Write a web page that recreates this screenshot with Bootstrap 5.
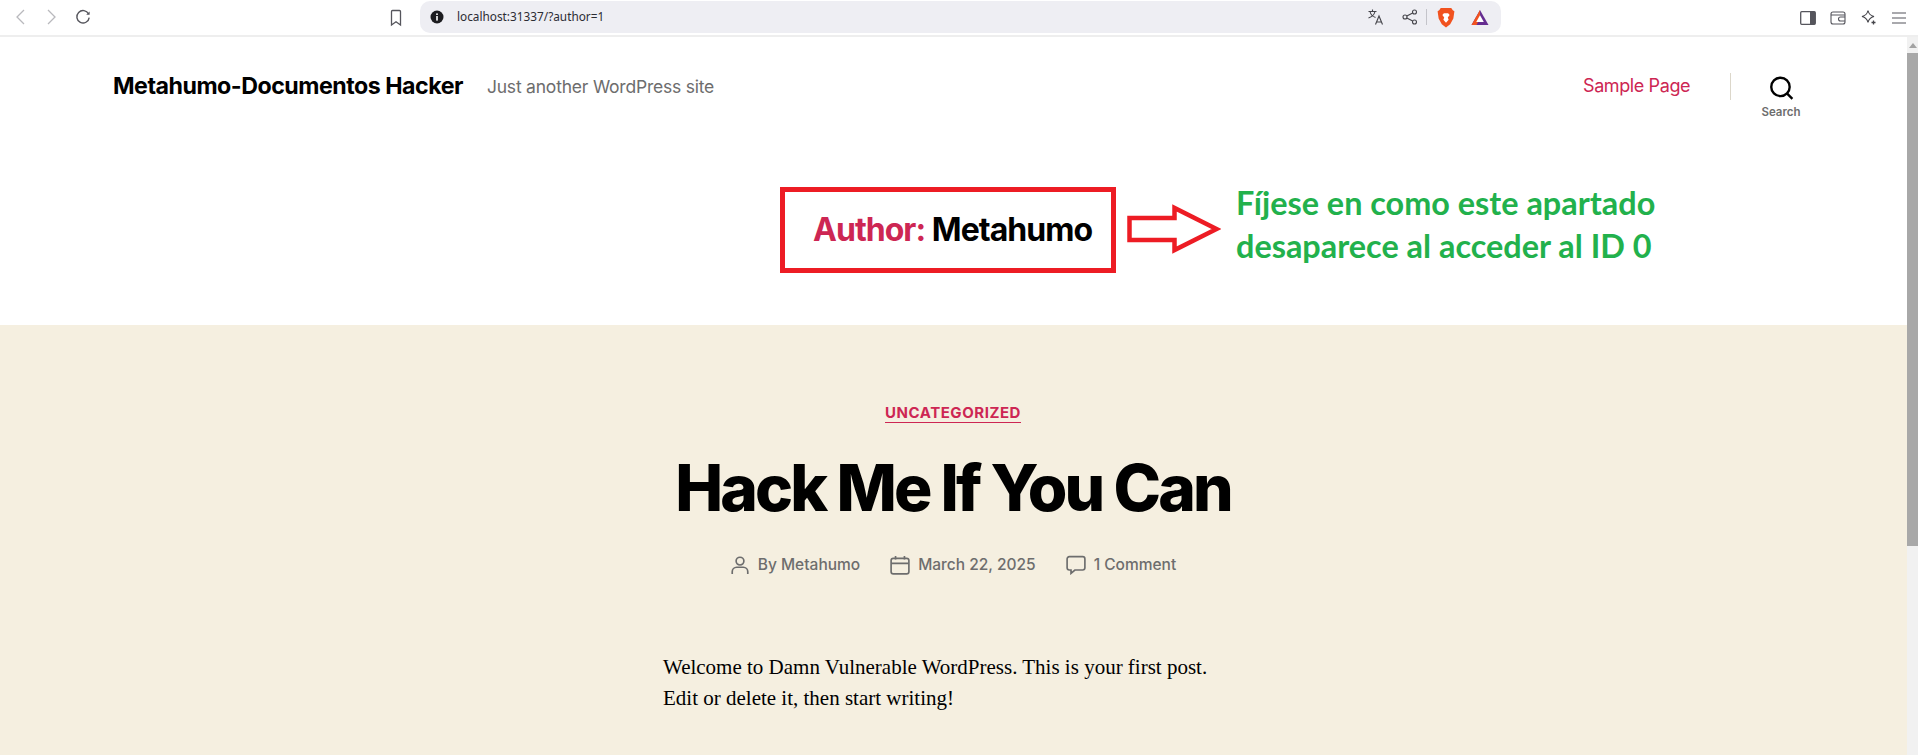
<!doctype html>
<html lang="en">
<head>
<meta charset="utf-8">
<title>Metahumo-Documentos Hacker</title>
<link rel="stylesheet" href="https://cdn.jsdelivr.net/npm/bootstrap@5.3.0/dist/css/bootstrap.min.css">
<style>
html,body{height:755px;overflow:hidden;background:#fff;font-family:Inter,"Liberation Sans",sans-serif}
.chrome-bar{height:37px;border-bottom:2px solid #eeeeee;background:#fff;position:relative}
.chrome-left{position:absolute;left:14px;top:8px;gap:16px}
.url-pill{position:absolute;left:420px;top:1px;width:1081px;height:32px;background:#eeeef3;border-radius:10px;padding:0 12px 0 10px}
.url-text{font-family:"Noto Sans",sans-serif;font-size:11.8px;color:#2c2c33;margin-left:13px}
.bm{position:absolute;left:389px;top:9px}
.chrome-right{position:absolute;left:1800px;top:9px;gap:14px}
.page-wrap{position:relative;height:718px;overflow:hidden}
.v-scroll{position:absolute;right:0;top:0;bottom:0;width:11px;background:#f1f1f1}
.v-scroll i{display:block;position:absolute;left:0;right:0;top:16px;height:493px;background:#a8a8a8}
.v-scroll b{position:absolute;left:2px;top:6px;width:0;height:0;border-left:4px solid transparent;border-right:4px solid transparent;border-bottom:5px solid #a3a3a3}
.site-head{height:288px;position:relative}
.brand-row{position:absolute;left:113px;right:0;top:0;height:100px}
.site-name{font-size:23.2px;font-weight:700;letter-spacing:-.021em;color:#000;margin-top:34px;line-height:30px}
.site-tag{font-size:17.5px;color:#6d6d6d;margin-left:24px;margin-top:35px;line-height:30px;letter-spacing:-.012em}
.nav-link-x{position:absolute;left:1583px;top:36px;font-size:18px;color:#cd2653;letter-spacing:-.022em;line-height:26px}
.nav-sep{position:absolute;left:1730px;top:36px;width:1px;height:27px;background:#dcd7ca}
.search-x{position:absolute;left:1761px;top:37px;width:40px;text-align:center}
.search-x small{display:block;font-size:11.5px;font-weight:600;color:#6d6d6d;line-height:12px;margin-top:5px}
.author-box{position:absolute;left:780px;top:150px;width:336px;height:86px;border:5px solid #ed1c24;font-size:32px;font-weight:700;letter-spacing:-.03em;padding:16px 0 0 28px;line-height:44px;color:#000;margin:0}
.author-box span{color:#cd2653}
.anno-arrow{position:absolute;left:1127px;top:167px}
.anno-text{position:absolute;left:1236px;top:144px;font-family:Lato,sans-serif;font-weight:700;font-size:32.4px;line-height:43px;color:#22b14c;white-space:nowrap}
.post{background:#f5efe0;height:430px;text-align:center;padding:75px 12px 0 0}
.cat{font-size:15px;font-weight:700;letter-spacing:.036em;color:#cd2653;text-transform:uppercase;border-bottom:1px solid #cd2653;line-height:19px;display:inline-block}
.post-title{font-size:64px;font-weight:800;letter-spacing:-.045em;line-height:64px;color:#000;margin:32px 0 0}
.meta-row{font-size:15.5px;font-weight:500;color:#6d6d6d;gap:30px;margin-top:35px;line-height:20px}
.meta-row svg{margin-right:8px}
.post-body{font-family:"Liberation Serif",serif;font-size:21px;line-height:31px;color:#000;text-align:left;width:580px;margin:77px 0 0 663px}
</style>
</head>
<body>
<div class="chrome-bar">
  <div class="chrome-left d-flex align-items-center">
    <svg width="14" height="18" viewBox="0 0 14 18" fill="none" stroke="#b9b9bd" stroke-width="1.3"><path d="M10 2 3 9l7 7"/></svg>
    <svg width="14" height="18" viewBox="0 0 14 18" fill="none" stroke="#b9b9bd" stroke-width="1.3"><path d="m4 2 7 7-7 7"/></svg>
    <svg width="18" height="18" viewBox="0 0 18 18" fill="none" stroke="#55555c" stroke-width="1.4"><path d="M14.6 6A6.2 6.2 0 1 0 15.2 9.6"/><path d="M15.6 3.4v3.4h-3.4z" fill="#55555c" stroke="none"/></svg>
  </div>
  <svg class="bm" width="14" height="18" viewBox="0 0 14 18" fill="none" stroke="#55555c" stroke-width="1.3"><path d="M2.5 2.5a1 1 0 0 1 1-1h7a1 1 0 0 1 1 1V16L7 12.8 2.5 16z"/></svg>
  <div class="url-pill d-flex align-items-center">
    <svg width="14" height="14" viewBox="0 0 14 14"><circle cx="7" cy="7" r="6.5" fill="#1c1c20"/><rect x="6.2" y="6" width="1.6" height="4.6" fill="#fff"/><rect x="6.2" y="3.4" width="1.6" height="1.6" fill="#fff"/></svg>
    <span class="url-text">localhost:31337/?author=1</span>
    <div class="ms-auto d-flex align-items-center">
      <svg width="18" height="18" viewBox="0 0 18 18" fill="none" stroke="#44444a" stroke-width="1.1"><path d="M1.5 3.5h8M5.5 1.5v2M3 3.5c.7 3 2.7 5 5.500 6M8 3.500c-.7 3-3 5.400-6.500 6.500"/><path d="M8.500 16.500 12 8l3.500 8.500M9.700 14h4.800"/></svg>
      <svg style="margin-left:17px" width="16" height="16" viewBox="0 0 16 16" fill="none" stroke="#44444a" stroke-width="1.1"><circle cx="3" cy="8" r="2"/><circle cx="12.500" cy="3" r="2"/><circle cx="12.500" cy="13" r="2"/><path d="m4.800 7 5.900-3.100M4.800 9l5.900 3.100"/></svg>
      <span class="ms-2" style="width:1px;height:16px;background:#c4c4ca"></span>
      <svg style="margin-left:10px" width="18" height="21" viewBox="0 0 17 20"><path d="M3.500 1h10l1.500 2 1.500 1-1 7-3 5.500L8.500 19.500 4.500 16.500l-3-5.500-1-7L2 3z" fill="#f1521f"/><path d="M5 7.500 6.500 6h4L12 7.500l-1.800 2.500.8 2.200-2.500 2.800-2.500-2.800.8-2.200z" fill="#fff"/></svg>
      <svg class="ms-3" width="18" height="17" viewBox="0 0 18 17"><path d="M9 1 17.500 16H.5z" fill="#662d91"/><path d="M9 1 .5 16h5L9 9z" fill="#f1521f"/><path d="M9 6.200 12.800 13H5.200z" fill="#fff"/></svg>
    </div>
  </div>
  <div class="chrome-right d-flex align-items-center">
    <svg width="16" height="16" viewBox="0 0 16 16"><rect x=".7" y="1.700" width="14.600" height="12.600" rx="1" fill="none" stroke="#55555c" stroke-width="1.300"/><rect x="10" y="2" width="5" height="12" fill="#55555c"/></svg>
    <svg width="16" height="16" viewBox="0 0 16 16" fill="none" stroke="#55555c" stroke-width="1.100"><rect x="1" y="2" width="14" height="12" rx="2"/><path d="M1 5h14M15 7h-4.500a1.500 1.500 0 0 0 0 4H15"/></svg>
    <svg width="17" height="17" viewBox="0 0 17 17" fill="none" stroke="#44444a" stroke-width="1.100"><path d="M8 1.500c.8 3.500 2.500 5.200 6 6-3.500.8-5.200 2.500-6 6-.8-3.500-2.500-5.200-6-6 3.500-.8 5.200-2.500 6-6z"/><path d="M13.500 11.500v4M11.500 13.500h4" stroke-width="1.300"/></svg>
    <svg width="16" height="14" viewBox="0 0 16 14" stroke="#55555c" stroke-width="1.200"><path d="M1 2h14M1 7h14M1 12h14"/></svg>
  </div>
</div>
<div class="page-wrap">
  <header class="site-head">
    <div class="brand-row d-flex">
      <div class="site-name">Metahumo-Documentos Hacker</div>
      <div class="site-tag">Just another WordPress site</div>
    </div>
    <a class="nav-link-x text-decoration-none" href="#">Sample Page</a>
    <span class="nav-sep"></span>
    <div class="search-x">
      <svg width="26" height="26" viewBox="0 0 24 24" fill="none" stroke="#000" stroke-width="2.200"><circle cx="11.500" cy="11" r="8.500"/><path d="m17.500 17 5 5"/></svg>
      <small>Search</small>
    </div>
    <h1 class="author-box"><span>Author:</span> Metahumo</h1>
    <svg class="anno-arrow" width="94" height="50" viewBox="0 0 94 50" fill="none" stroke="#ed1c24" stroke-width="4.500"><path d="M2.500 14h45V4l42 21-42 21V36h-45z"/></svg>
    <div class="anno-text">Fíjese en como este apartado<br>desaparece al acceder al ID 0</div>
  </header>
  <main class="post">
    <a class="cat text-decoration-none" href="#">Uncategorized</a>
    <h2 class="post-title">Hack Me If You Can</h2>
    <div class="meta-row d-flex justify-content-center">
      <span class="d-flex align-items-center"><svg width="20" height="20" viewBox="0 0 18 18" fill="none" stroke="#6d6d6d" stroke-width="1.500"><circle cx="9" cy="5.500" r="3.500"/><path d="M2 17v-2a4 4 0 0 1 4-4h6a4 4 0 0 1 4 4v2"/></svg>By Metahumo</span>
      <span class="d-flex align-items-center"><svg width="20" height="20" viewBox="0 0 18 18" fill="none" stroke="#6d6d6d" stroke-width="1.500"><rect x="1" y="3" width="16" height="14" rx="2"/><path d="M1 7.500h16M5 1v3M13 1v3"/></svg>March 22, 2025</span>
      <span class="d-flex align-items-center"><svg width="20" height="20" viewBox="0 0 18 18" fill="none" stroke="#6d6d6d" stroke-width="1.500"><path d="M3 1.500h12a2 2 0 0 1 2 2v8a2 2 0 0 1-2 2H8l-3.500 3v-3H3a2 2 0 0 1-2-2v-8a2 2 0 0 1 2-2z"/></svg>1 Comment</span>
    </div>
    <p class="post-body">Welcome to Damn Vulnerable WordPress. This is your first post. Edit or delete it, then start writing!</p>
  </main>
  <div class="v-scroll"><b></b><i></i></div>
</div>
</body>
</html>
